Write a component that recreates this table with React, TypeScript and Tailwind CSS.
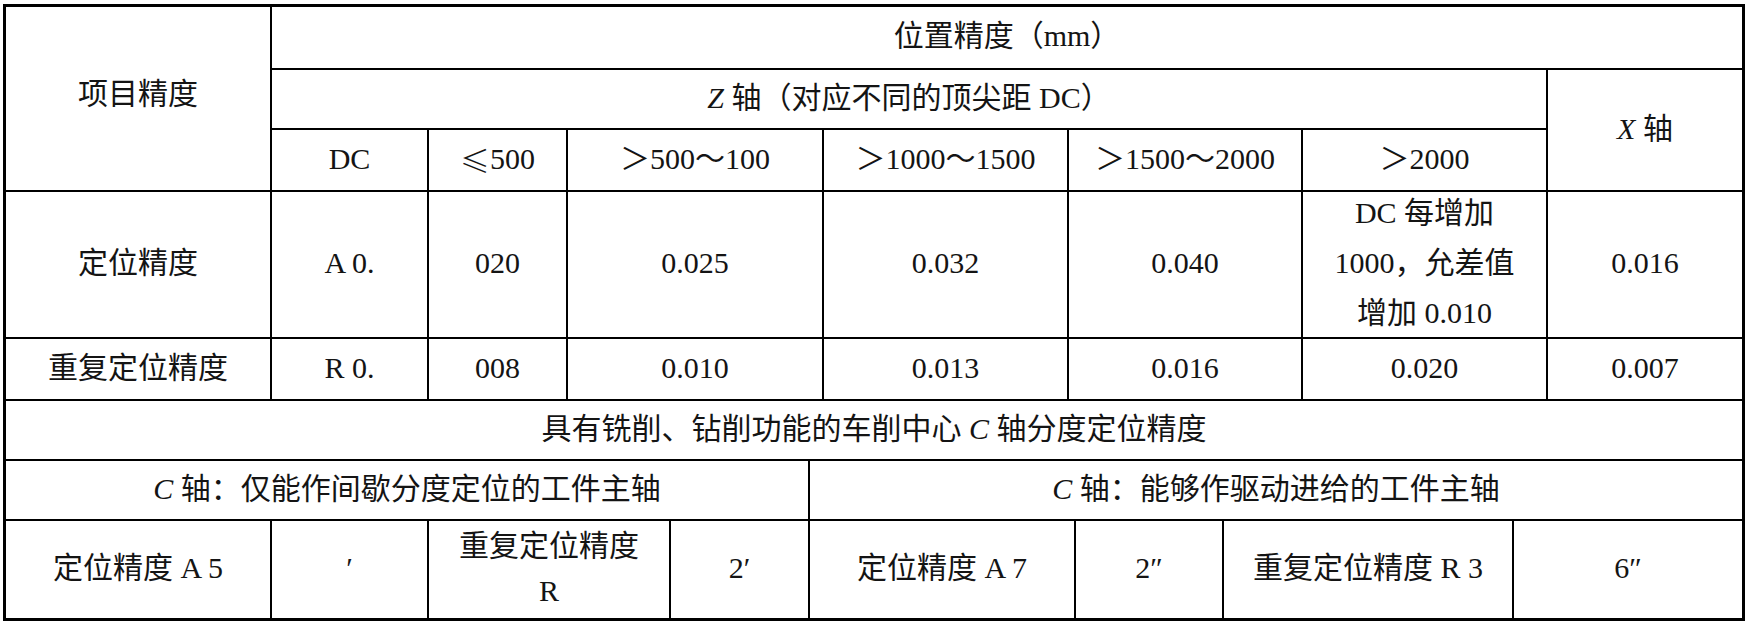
import type { ReactNode } from 'react'

const FONT = '[font-family:"Liberation_Serif","Noto_Sans_CJK_SC",serif]'

function Cell({ className = '', children }: { className?: string; children?: ReactNode }) {
  return (
    <div className={`bg-white flex items-center justify-center text-center pb-[3px] ${className}`}>
      {children}
    </div>
  )
}

function I({ children }: { children: ReactNode }) {
  return <span className="italic">{children}</span>
}

const Z_RANGES = ['＞500～100', '＞1000～1500', '＞1500～2000', '＞2000']

export default function App() {
  return (
    <div className={`w-[1748px] h-[630px] bg-white pt-[4px] pl-[3px] ${FONT} text-[30px] leading-none text-[#141414]`}>
      <div className="w-[1742px] h-[617px] border-[3px] border-black bg-black flex flex-col gap-[2px]">
        {/* 位置精度 */}
        <div className="grid grid-cols-[264px_155px_137px_254px_243px_232px_243px_194px] grid-rows-[61px_58px_60px_145px_60px] gap-[2px]">
          <Cell className="row-span-3 pb-[10px]">项目精度</Cell>
          <Cell className="col-span-7">位置精度（mm）</Cell>
          <Cell className="col-span-6">
            <I>Z</I>&nbsp;轴（对应不同的顶尖距 DC）
          </Cell>
          <Cell className="row-span-2">
            <I>X</I>&nbsp;轴
          </Cell>
          <Cell>DC</Cell>
          <Cell>
            <span className='[font-family:"Noto_Sans_CJK_SC",sans-serif] font-light'>≤</span>500
          </Cell>
          {Z_RANGES.map((r) => (
            <Cell key={r}>{r}</Cell>
          ))}

          <Cell>定位精度</Cell>
          <Cell>A 0.</Cell>
          <Cell>020</Cell>
          <Cell>0.025</Cell>
          <Cell>0.032</Cell>
          <Cell>0.040</Cell>
          <Cell className="leading-[50px]">
            <div>
              DC 每增加
              <br />
              1000，允差值
              <br />
              增加 0.010
            </div>
          </Cell>
          <Cell>0.016</Cell>

          <Cell>重复定位精度</Cell>
          <Cell>R 0.</Cell>
          <Cell>008</Cell>
          <Cell>0.010</Cell>
          <Cell>0.013</Cell>
          <Cell>0.016</Cell>
          <Cell>0.020</Cell>
          <Cell>0.007</Cell>
        </div>

        <Cell className="h-[58px]">
          具有铣削、钻削功能的车削中心&nbsp;<I>C</I>&nbsp;轴分度定位精度
        </Cell>

        {/* C 轴 */}
        <div className="grid grid-cols-[264px_155px_240px_137px_264px_146px_288px_228px] grid-rows-[58px_97px] gap-[2px]">
          <Cell className="col-span-4">
            <I>C</I>&nbsp;轴：仅能作间歇分度定位的工件主轴
          </Cell>
          <Cell className="col-span-4">
            <I>C</I>&nbsp;轴：能够作驱动进给的工件主轴
          </Cell>
          <Cell>定位精度 A 5</Cell>
          <Cell>′</Cell>
          <Cell className="leading-[45px]">
            <div>
              重复定位精度
              <br />R
            </div>
          </Cell>
          <Cell>2′</Cell>
          <Cell>定位精度 A 7</Cell>
          <Cell>2″</Cell>
          <Cell>重复定位精度 R 3</Cell>
          <Cell>6″</Cell>
        </div>
      </div>
    </div>
  )
}
